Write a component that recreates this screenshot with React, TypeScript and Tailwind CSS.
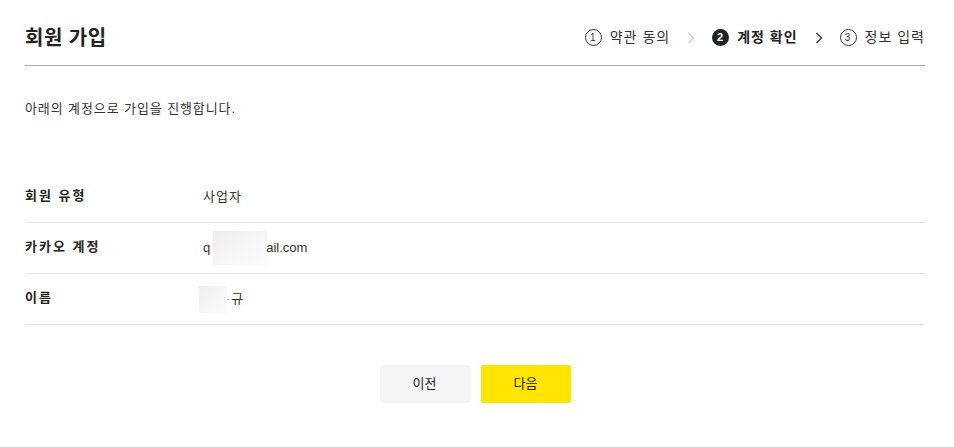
import React from 'react';

const font = { fontFamily: '"Liberation Sans", "Noto Sans CJK KR", sans-serif' };

function Chevron({ dark }: { dark?: boolean }) {
  return (
    <svg width="8" height="12" viewBox="0 0 8 12" className="shrink-0">
      <polyline
        points="1.5,1 6.5,6 1.5,11"
        fill="none"
        stroke={dark ? '#333333' : '#cccccc'}
        strokeWidth="1.3"
      />
    </svg>
  );
}

function StepNum({ n, active }: { n: number; active?: boolean }) {
  return active ? (
    <span className="w-[17px] h-[17px] rounded-full bg-[#222222] text-white text-[11px] font-bold flex items-center justify-center leading-none">
      {n}
    </span>
  ) : (
    <span className="w-[17px] h-[17px] rounded-full border border-[#333333] text-[#333333] text-[10px] flex items-center justify-center leading-none">
      {n}
    </span>
  );
}

function Blur({ w, h }: { w: number; h: number }) {
  return (
    <span
      className="inline-block align-middle bg-gradient-to-br from-[#ededed] via-[#f6f6f6] to-[#fbfbfb]"
      style={{ width: w, height: h }}
    />
  );
}

export default function App() {
  const rows = [
    { label: '회원 유형', value: <span className="tracking-[1px]">사업자</span> },
    {
      label: '카카오 계정',
      value: (
        <span className="flex items-center">
          q<span className="ml-[3px] -mr-[1px]"><Blur w={54} h={34} /></span>ail.com
        </span>
      ),
    },
    {
      label: '이름',
      value: (
        <span className="flex items-center -ml-[4px]">
          <Blur w={28} h={27} />
          <span className="text-[#999999] -ml-[1px] mr-[1px]">·</span>규
        </span>
      ),
    },
  ];

  return (
    <div className="bg-white w-[954px] h-[447px]" style={font}>
      <div className="w-[900px] ml-[25px]">
        <header className="h-[66px] pt-[10px] flex items-center justify-between border-b border-[#aaaaaa]">
          <h1 className="text-[20px] font-bold text-[#222222] tracking-[0.5px]">회원 가입</h1>
          <nav className="flex items-center gap-[17px] text-[14px] text-[#333333] tracking-[1px]">
            <span className="flex items-center gap-[8px]">
              <StepNum n={1} />
              <span>약관 동의</span>
            </span>
            <Chevron />
            <span className="flex items-center gap-[8px]">
              <StepNum n={2} active />
              <span className="font-bold text-[#222222]">계정 확인</span>
            </span>
            <Chevron dark />
            <span className="flex items-center gap-[8px]">
              <StepNum n={3} />
              <span>정보 입력</span>
            </span>
          </nav>
        </header>

        <p className="mt-[33px] text-[13px] leading-[20px] text-[#333333] tracking-[0.9px]">
          아래의 계정으로 가입을 진행합니다.
        </p>

        <div className="mt-[53px]">
          {rows.map((r) => (
            <div key={r.label} className="h-[51px] flex items-center border-b border-[#e5e5e5] text-[13px]">
              <span className="w-[178px] font-bold text-[#222222] tracking-[2px] -mt-[2px]">{r.label}</span>
              <span className="text-[#333333]">{r.value}</span>
            </div>
          ))}
        </div>

        <div className="mt-[40px] flex justify-center gap-[11px] text-[13px] text-[#222222]">
          <button className="w-[90px] h-[38px] rounded-[2px] bg-[#f5f5f5]">이전</button>
          <button className="w-[90px] h-[38px] rounded-[2px] bg-[#ffe500]">다음</button>
        </div>
      </div>
    </div>
  );
}
